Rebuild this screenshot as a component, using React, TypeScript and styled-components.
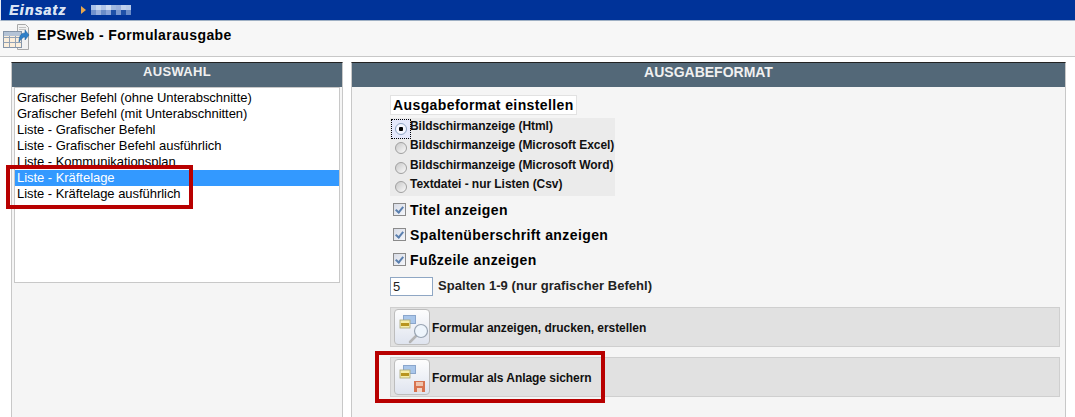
import React from "react"
import styled, { createGlobalStyle } from "styled-components"

const GlobalStyle = createGlobalStyle`
  html, body {
    margin: 0;
    padding: 0;
    background: #fff;
    overflow: hidden;
  }
  body {
    font-family: "Liberation Sans", Arial, sans-serif;
    color: #000;
  }
`

const LIST_ITEMS = [
  "Grafischer Befehl (ohne Unterabschnitte)",
  "Grafischer Befehl (mit Unterabschnitten)",
  "Liste - Grafischer Befehl",
  "Liste - Grafischer Befehl ausführlich",
  "Liste - Kommunikationsplan",
  "Liste - Kräftelage",
  "Liste - Kräftelage ausführlich",
]

const FORMATS = [
  "Bildschirmanzeige (Html)",
  "Bildschirmanzeige (Microsoft Excel)",
  "Bildschirmanzeige (Microsoft Word)",
  "Textdatei - nur Listen (Csv)",
]

// the pixelated user name in the top bar, two rows of eight blocks
const MOSAIC = [
  "#a8c0e8", "#c8d8f0", "#b0c4e8", "#d0dcf0", "#a0b8e0", "#9ab0dc", "#c0d0ec", "#b8cae8",
  "#7090cc", "#9ab0dc", "#6a8cc8", "#8aa4d8", "#1e50a8", "#7a98d0", "#1e50a8", "#6a8cc8",
]

const TableIcon = () => (
  <svg width="28" height="28" viewBox="0 0 28 28">
    <path d="M15.500 .5h8l3 3v22h-11z" fill="#f2f2f2" stroke="#a8a8a8" />
    <path d="M17 3.500h7M17 5.500h7" stroke="#c4c4c4" />
    <rect x="1.500" y="7.500" width="18" height="16" fill="#fbeedb" stroke="#8494a8" />
    <path d="M1.500 13.500h18M1.500 18.500h18M7.500 7.500v16M13.500 7.500v16" stroke="#93a2b5" />
    <rect x="2" y="8" width="17" height="4" fill="#b4c3d6" />
    <path d="M17 18c0-6 2-9 6-9V6l4 5-4 5v-3c-2 0-4 2-6 5z" fill="#2f7fc8" stroke="#1c5c9c" strokeWidth=".5" />
  </svg>
)

const ImageStack = () => (
  <>
    <rect x="7.500" y="4.500" width="12" height="8" fill="#a9c6ea" stroke="#8aa6cc" />
    <rect x="4" y="9" width="10" height="8" fill="#f6eda8" stroke="#a9a678" strokeWidth=".8" />
    <rect x="5" y="12" width="8" height="3" fill="#b8941e" />
  </>
)

const PreviewIcon = () => (
  <svg width="33" height="33" viewBox="0 0 33 33">
    <ImageStack />
    <path d="M20 25L14 31" stroke="#b4b4b4" strokeWidth="2.500" strokeLinecap="round" />
    <circle cx="25" cy="20" r="6.500" fill="#eef5fc" stroke="#98a4b2" strokeWidth="1.200" />
  </svg>
)

const SaveIcon = () => (
  <svg width="33" height="33" viewBox="0 0 33 33">
    <ImageStack />
    <path d="M18 20h11v11H18z" fill="#d8734f" />
    <rect x="20" y="21" width="7" height="4" fill="#efc4ae" />
    <rect x="21" y="27" width="5" height="4" fill="#f3d6c8" />
  </svg>
)

const App: React.FC = () => {
  return (
    <Page>
      <GlobalStyle />
      <TopBar>
        <Brand>Einsatz</Brand>
        <Arrow />
        <Mosaic>
          {MOSAIC.map((color, index) => (
            <MosaicCell key={index} $color={color} />
          ))}
        </Mosaic>
      </TopBar>
      <TitleBar>
        <TableIcon />
        <Title>EPSweb - Formularausgabe</Title>
      </TitleBar>
      <Content>
        <LeftPanel>
          <PanelHeader>AUSWAHL</PanelHeader>
          <ListBox>
            {LIST_ITEMS.map((item) => (
              <ListItem key={item} $selected={item === "Liste - Kräftelage"}>
                {item}
              </ListItem>
            ))}
          </ListBox>
          <LeftHighlight />
        </LeftPanel>
        <RightPanel>
          <WideHeader>AUSGABEFORMAT</WideHeader>
          <FormArea>
            <Legend>Ausgabeformat einstellen</Legend>
            <RadioGroup>
              {FORMATS.map((format, index) => (
                <RadioRow key={format}>
                  <Radio $checked={index === 0} />
                  <RadioLabel>{format}</RadioLabel>
                </RadioRow>
              ))}
            </RadioGroup>
            <CheckRow>
              <CheckBox />
              <CheckLabel>Titel anzeigen</CheckLabel>
            </CheckRow>
            <CheckRow>
              <CheckBox />
              <CheckLabel>Spaltenüberschrift anzeigen</CheckLabel>
            </CheckRow>
            <CheckRow>
              <CheckBox />
              <CheckLabel>Fußzeile anzeigen</CheckLabel>
            </CheckRow>
            <ColumnsRow>
              <ColumnsInput>5</ColumnsInput>
              <ColumnsLabel>Spalten 1-9 (nur grafischer Befehl)</ColumnsLabel>
            </ColumnsRow>
            <ActionBar>
              <ActionButton>
                <PreviewIcon />
              </ActionButton>
              <ActionLabel>Formular anzeigen, drucken, erstellen</ActionLabel>
            </ActionBar>
            <ActionBar>
              <ActionButton>
                <SaveIcon />
              </ActionButton>
              <ActionLabel>Formular als Anlage sichern</ActionLabel>
              <RightHighlight />
            </ActionBar>
          </FormArea>
        </RightPanel>
      </Content>
    </Page>
  )
}

export default App

const Page = styled.div`
  width: 1075px;
  height: 417px;
  overflow: hidden;
  background: #fff;
`

const TopBar = styled.div`
  height: 20px;
  display: flex;
  align-items: center;
  padding-left: 8px;
  background: #003399;
  border-left: 1px solid #e8ecf4;
  border-bottom: 1px solid #9fb0c4;
`

const Brand = styled.div`
  width: 72px;
  font-size: 14px;
  font-weight: bold;
  font-style: italic;
  letter-spacing: 1.2px;
  color: #dbe4f4;
  text-shadow: 0.5px 0 0 #dbe4f4;
`

const Arrow = styled.div`
  width: 0;
  height: 0;
  margin-right: 5px;
  border-left: 5px solid #e8a64c;
  border-top: 4px solid transparent;
  border-bottom: 4px solid transparent;
`

const Mosaic = styled.div`
  display: grid;
  grid-template-columns: repeat(8, 5px);
  grid-auto-rows: 5px;
`

const MosaicCell = styled.div<{ $color: string }>`
  background: ${({ $color }) => $color};
`

const TitleBar = styled.div`
  height: 32px;
  display: flex;
  align-items: flex-start;
  padding: 3px 0 0 2px;
  background: #f7f7f7;
  border-bottom: 1px solid #c8c8c8;
`

const Title = styled.div`
  margin: 3px 0 0 7px;
  font-size: 14px;
  line-height: 16px;
  font-weight: bold;
  letter-spacing: 0.4px;
`

const Content = styled.div`
  display: flex;
  gap: 8px;
  padding: 5px 10px 0 11px;
`

const Panel = styled.div`
  position: relative;
  height: 355px;
  box-sizing: border-box;
  background: #f5f5f5;
  border: 1px solid #c8c8c8;
  border-top: 1px solid #222;
  border-bottom: none;
`

const LeftPanel = styled(Panel)`
  width: 332px;
  flex: none;
`

const RightPanel = styled(Panel)`
  flex: 1;
`

const PanelHeader = styled.div`
  height: 24px;
  line-height: 18px;
  text-align: center;
  font-size: 13px;
  font-weight: bold;
  letter-spacing: 0.3px;
  color: #f0f0f0;
  background: #536878;
`

const WideHeader = styled(PanelHeader)`
  font-size: 14px;
  letter-spacing: 0;
`

const ListBox = styled.div`
  height: 192px;
  margin: 0 2px;
  padding-top: 2px;
  background: #fff;
  border: 1px solid #c8c8c8;
`

const ListItem = styled.div<{ $selected?: boolean }>`
  height: 16px;
  padding-left: 2px;
  font-size: 13px;
  line-height: 16px;
  letter-spacing: -0.04px;
  white-space: nowrap;
  color: ${({ $selected }) => ($selected ? "#fff" : "#000")};
  background: ${({ $selected }) => ($selected ? "#3399ff" : "transparent")};
`

const Highlight = styled.div`
  position: absolute;
  box-sizing: border-box;
  border: 4px solid #b80000;
  pointer-events: none;
`

const LeftHighlight = styled(Highlight)`
  left: -6px;
  top: 102px;
  width: 187px;
  height: 44px;
`

const FormArea = styled.div`
  padding: 8px 5px 0 38px;
`

const Legend = styled.div`
  width: fit-content;
  height: 18px;
  padding: 0 2px;
  font-size: 14px;
  line-height: 18px;
  font-weight: bold;
  letter-spacing: 0.4px;
  background: #fff;
  border: 1px solid #e2e2e2;
`

const RadioGroup = styled.div`
  width: 225px;
  height: 78px;
  margin: 3px 0 1px;
  background: #ebebeb;
  padding-top: 1px;
  box-sizing: border-box;
  isolation: isolate;
`

const RadioRow = styled.div`
  height: 19.300px;
  display: flex;
  align-items: flex-start;
  padding-left: 5px;
`

const Radio = styled.div<{ $checked?: boolean }>`
  position: relative;
  width: 12px;
  height: 12px;
  margin-top: 4px;
  flex: none;
  box-sizing: border-box;
  border-radius: 50%;
  border: 1px solid ${({ $checked }) => ($checked ? "#8ea4c4" : "#a0a0a0")};
  background: ${({ $checked }) => ($checked ? "radial-gradient(circle, #000 0 2px, #f4f6ff 2.500px)" : "linear-gradient(135deg, #c8c8c8, #fafafa)")};
  &::before {
    content: "";
    display: ${({ $checked }) => ($checked ? "block" : "none")};
    position: absolute;
    inset: -5px;
    border: 1px dotted #000;
    background: #e4e8fb;
    z-index: -1;
  }
`

const RadioLabel = styled.span`
  margin-left: 3px;
  font-size: 12px;
  line-height: 15px;
  font-weight: bold;
  letter-spacing: -0.05px;
  white-space: nowrap;
  color: #111;
`

const CheckRow = styled.div`
  height: 25px;
  display: flex;
  align-items: center;
  padding-left: 3px;
`

const CheckBox = styled.div`
  position: relative;
  width: 13px;
  height: 13px;
  flex: none;
  box-sizing: border-box;
  border: 1px solid #8a8a8a;
  background: linear-gradient(135deg, #d8dce6, #f4f6fa);
  &::after {
    content: "";
    position: absolute;
    left: 3px;
    top: 1px;
    width: 3px;
    height: 6px;
    border-right: 2px solid #5a7fae;
    border-bottom: 2px solid #5a7fae;
    transform: rotate(40deg);
  }
`

const CheckLabel = styled.span`
  margin-left: 4px;
  font-size: 14px;
  font-weight: bold;
  letter-spacing: 0.4px;
  white-space: nowrap;
`

const ColumnsRow = styled.div`
  display: flex;
  align-items: flex-start;
  height: 30px;
  margin-top: 5px;
`

const ColumnsInput = styled.div`
  width: 39px;
  height: 17px;
  padding-left: 2px;
  flex: none;
  font-size: 13px;
  line-height: 18px;
  color: #222;
  background: #fff;
  border: 1px solid #8fa7c4;
`

const ColumnsLabel = styled.span`
  margin-left: 5px;
  font-size: 13px;
  line-height: 17px;
  font-weight: bold;
  letter-spacing: 0.05px;
  white-space: nowrap;
  color: #222;
`

const ActionBar = styled.div`
  position: relative;
  width: 670px;
  height: 40px;
  margin-bottom: 10px;
  display: flex;
  align-items: center;
  padding-left: 3px;
  box-sizing: border-box;
  background: #e1e1e1;
  border: 1px solid #cfcfcf;
`

const ActionButton = styled.div`
  width: 36px;
  height: 36px;
  flex: none;
  display: flex;
  align-items: center;
  justify-content: center;
  box-sizing: border-box;
  background: linear-gradient(#fdfdfd, #dfe4ef);
  border: 1px solid #bdbdbd;
  border-radius: 4px;
`

const ActionLabel = styled.span`
  margin: 2px 0 0 2px;
  font-size: 12px;
  font-weight: bold;
  letter-spacing: -0.05px;
  white-space: nowrap;
  color: #111;
`

const RightHighlight = styled(Highlight)`
  left: -16px;
  top: -7px;
  width: 230px;
  height: 52px;
`
